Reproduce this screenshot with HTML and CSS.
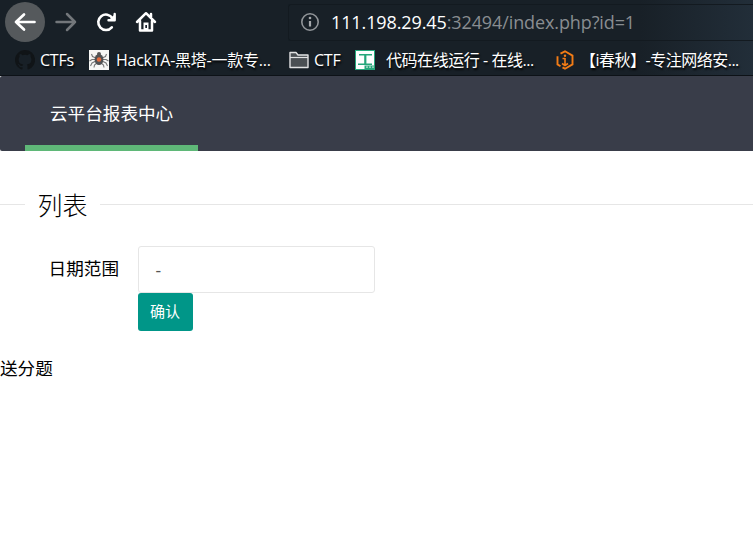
FILE: index.html
```
<!DOCTYPE html>
<html lang="zh-CN">
<head>
<meta charset="utf-8">
<title>云平台报表中心</title>
<link rel="stylesheet" href="styles.css">
</head>
<body>
<header class="browser">
  <div class="toolbar">
    <span class="back"><svg width="40" height="40" viewBox="0 0 40 40"><path d="M29.5 20H11M19 12.500L11 20l8 7.500" fill="none" stroke="#fff" stroke-width="2.700" stroke-linecap="round" stroke-linejoin="round"/></svg></span>
    <svg class="forward" width="22" height="20" viewBox="0 0 22 20"><path d="M1.500 10H20M12 2l8 8-8 8" fill="none" stroke="#73777b" stroke-width="2.500" stroke-linecap="round" stroke-linejoin="round"/></svg>
    <svg class="reload" width="22" height="22" viewBox="0 0 22 22"><path d="M15.800 16.300A7.700 7.700 0 1 1 16.500 7.200" fill="none" stroke="#fff" stroke-width="2.600" stroke-linecap="round"/><path d="M18.700 3v6.300H12.500" fill="none" stroke="#fff" stroke-width="2.400" stroke-linecap="round" stroke-linejoin="round"/><path d="M18 4v5h-5z" fill="#fff"/></svg>
    <svg class="home" width="22" height="22" viewBox="0 0 22 22"><path d="M2 11l9-8.800 9 8.800M5 10v9.500h12V10M16 3v4" fill="none" stroke="#fff" stroke-width="2.500" stroke-linecap="round" stroke-linejoin="round"/><path d="M8.500 19v-7.500h5V19z" fill="#fff"/><path d="M10.300 14h1.700v3h-1.700z" fill="#18202a"/></svg>
    <div class="address">
      <svg class="info" width="20" height="20" viewBox="0 0 20 20"><circle cx="10" cy="10" r="8.200" fill="none" stroke="#919599" stroke-width="1.600"/><path d="M10 9v5.500" stroke="#a5a8ab" stroke-width="2.200"/><circle cx="10" cy="6" r="1.300" fill="#a5a8ab"/></svg>
      <span class="url"><b>111.198.29.45</b>:32494/index.php?id=1</span>
    </div>
  </div>
  <div class="bookmarks">
    <div class="mark ctfs"><svg width="20" height="20" viewBox="0 0 16 16"><path fill="#101417" d="M8 0C3.580 0 0 3.580 0 8c0 3.540 2.290 6.530 5.470 7.590.4.070.55-.17.55-.38v-1.490c-2.010.37-2.530-.49-2.690-.94-.09-.23-.48-.94-.82-1.130-.28-.15-.68-.52-.01-.53.630-.01 1.080.58 1.230.82.720 1.210 1.870.87 2.330.66.070-.52.280-.87.510-1.070-1.780-.2-3.640-.89-3.640-3.950 0-.87.310-1.590.82-2.150-.08-.2-.36-1.020.08-2.120 0 0 .67-.21 2.200.82a7.600 7.600 0 0 1 4 0c1.530-1.040 2.200-.82 2.200-.82.440 1.100.16 1.920.08 2.120.51.560.82 1.270.82 2.150 0 3.070-1.870 3.750-3.650 3.950.29.250.54.730.54 1.480v2.200c0 .21.150.46.550.38A8 8 0 0 0 8 0z"/></svg><span>CTFs</span></div>
    <div class="mark hackta"><svg width="20" height="20" viewBox="0 0 20 20"><path fill="#f7f7f5" d="M0 0h20v20H0z"/><path d="M7 8L3.500 6.500 2.500 4M7 9.500L3 9.500.5 11M7 11l-4 2-1.500 3M8 13l-2.500 2-.5 2.500M13 8l3.500-1.500 1-2.500M13 9.500l4 0 2.500 1.500M13 11l4 2 1.500 3M12 13l2.500 2 .5 2.500" fill="none" stroke="#777" stroke-width="1.100"/><ellipse cx="10" cy="9.500" rx="4.400" ry="5.500" fill="#505254"/><circle cx="10" cy="4" r="2" fill="#555"/><circle cx="10" cy="9.500" r="2.200" fill="#e36a3d"/></svg><span>HackTA-黑塔-一款专...</span></div>
    <div class="mark ctf"><svg width="20" height="20" viewBox="0 0 20 20"><path d="M1 17V2.500h6l2 2.500h10v12.500H1z" fill="#4b5054" stroke="#e1e2e3" stroke-width="1.400" stroke-linejoin="round"/><path d="M1 7.500h18" stroke="#e1e2e3" stroke-width="1.200"/></svg><span>CTF</span></div>
    <div class="mark code"><svg width="20" height="20" viewBox="0 0 20 20"><path d="M0 0h20v20H0z" fill="#25a77b"/><path d="M1 1h18v14.500H9.500V19H1z" fill="#fff"/><path d="M4 4h13v1.600h-5.600v7.800H17V15H3v-1.600h6.200V5.600H4z" fill="#25a77b"/><path d="M11 17.200h2m1 0h2m1 0h2" stroke="#8ed2b8" stroke-width="1.800"/></svg><span>代码在线运行 - 在线...</span></div>
    <div class="mark ichunqiu"><svg width="18" height="20" viewBox="0 0 18 20"><path d="M4.500 3.600L9 1.300l7.500 4.300v8.800L9 18.700l-2.500-1.400M4.500 16.200l-3-1.800V6.200" fill="none" stroke="#f27c16" stroke-width="1.900"/><path d="M9 8v7.200M6 13.500l3 2 3-2M6.500 8.500H9" fill="none" stroke="#f27c16" stroke-width="1.600"/><circle cx="9" cy="5.800" r="1.200" fill="#f27c16"/></svg><span>【i春秋】-专注网络安...</span></div>
  </div>
</header>
<nav class="nav"><a class="nav-item">云平台报表中心</a></nav>
<main>
  <fieldset class="title"><legend>列表</legend></fieldset>
  <form class="form">
    <label class="label">日期范围</label>
    <div class="controls">
      <input class="range" type="text" placeholder=" - ">
      <button class="submit" type="button">确认</button>
    </div>
  </form>
  <p class="note">送分题</p>
</main>
</body>
</html>
```
FILE: styles.css
```
* { box-sizing: border-box; }
body {
  margin: 0;
  height: 554px;
  overflow: hidden;
  background: #fff;
  color: #000;
  font-family: "Open Sans", "Noto Sans CJK SC", sans-serif;
}
svg { display: block; flex: none; }
.browser {
  height: 76px;
  background: linear-gradient(90deg, #182027 0%, #182027 85%, #222e39 100%);
  border-bottom: 1px solid #0d1217;
}
.toolbar { display: flex; align-items: center; height: 44px; padding-left: 5px; }
.back { width: 40px; height: 40px; border-radius: 50%; background: #55595c; }
.forward { margin-left: 10px; }
.reload { margin-left: 19px; }
.home { margin-left: 17px; }
.address {
  display: flex;
  align-items: center;
  flex: 1;
  height: 37px;
  margin: 1px 0 0 131px;
  padding: 0 0 2px 11px;
  border: 1px solid #131a20;
  border-right: 0;
  border-radius: 3px 0 0 3px;
}
.url { margin-left: 11px; color: #898d91; font-size: 18px; line-height: 24px; letter-spacing: -0.11px; white-space: nowrap; }
.url b { color: #fff; font-weight: 400; }
.bookmarks { display: flex; height: 31px; padding-left: 15px; color: #fff; font-size: 16px; }
.mark { display: flex; align-items: center; flex: none; white-space: nowrap; text-shadow: 1px 2px 2px #000; }
.mark span { line-height: 24px; letter-spacing: -0.25px; }
.ctfs { width: 74px; gap: 5px; }
.hackta { width: 200px; gap: 7px; }
.ctf { width: 66px; gap: 5px; }
.code { width: 201px; gap: 11px; }
.code span { letter-spacing: -0.45px; }
.ichunqiu { gap: 6px; }
.ichunqiu span { letter-spacing: -0.5px; }
.nav { display: flex; height: 75px; padding-left: 25px; background: #393d49; border-radius: 2px 0 0 2px; }
.nav-item {
  width: 173px;
  padding-left: 25px;
  border-bottom: 6px solid #5fb878;
  color: #fff;
  font-size: 17.6px;
  line-height: 75px;
  white-space: nowrap;
}
.title { height: 42px; margin: 36px 0 0; padding: 0 0 0 25px; border: 0; border-top: 1px solid #e6e6e6; }
.title legend { height: 34px; padding: 0 12.5px; font-size: 25px; font-weight: 300; line-height: 36px; }
.form { display: flex; margin-top: 17px; }
.label { width: 138px; padding-right: 19px; text-align: right; font-size: 17.6px; line-height: 45px; }
.controls { display: flex; flex-direction: column; align-items: flex-start; }
.range {
  width: 237px;
  height: 47px;
  padding: 0 12px;
  border: 1px solid #e6e6e6;
  border-radius: 3px;
  font: 17.5px "Open Sans", sans-serif;
}
.range::placeholder { color: #555; opacity: 1; white-space: pre; }
.submit {
  width: 55px;
  height: 38px;
  padding: 0 1px 2px 0;
  border: 0;
  border-radius: 3px;
  background: #009688;
  color: #fff;
  font: 15px/36px "Noto Sans CJK SC", sans-serif;
}
.note { margin: 24px 0 0; font-size: 17.6px; line-height: 26px; }
```
